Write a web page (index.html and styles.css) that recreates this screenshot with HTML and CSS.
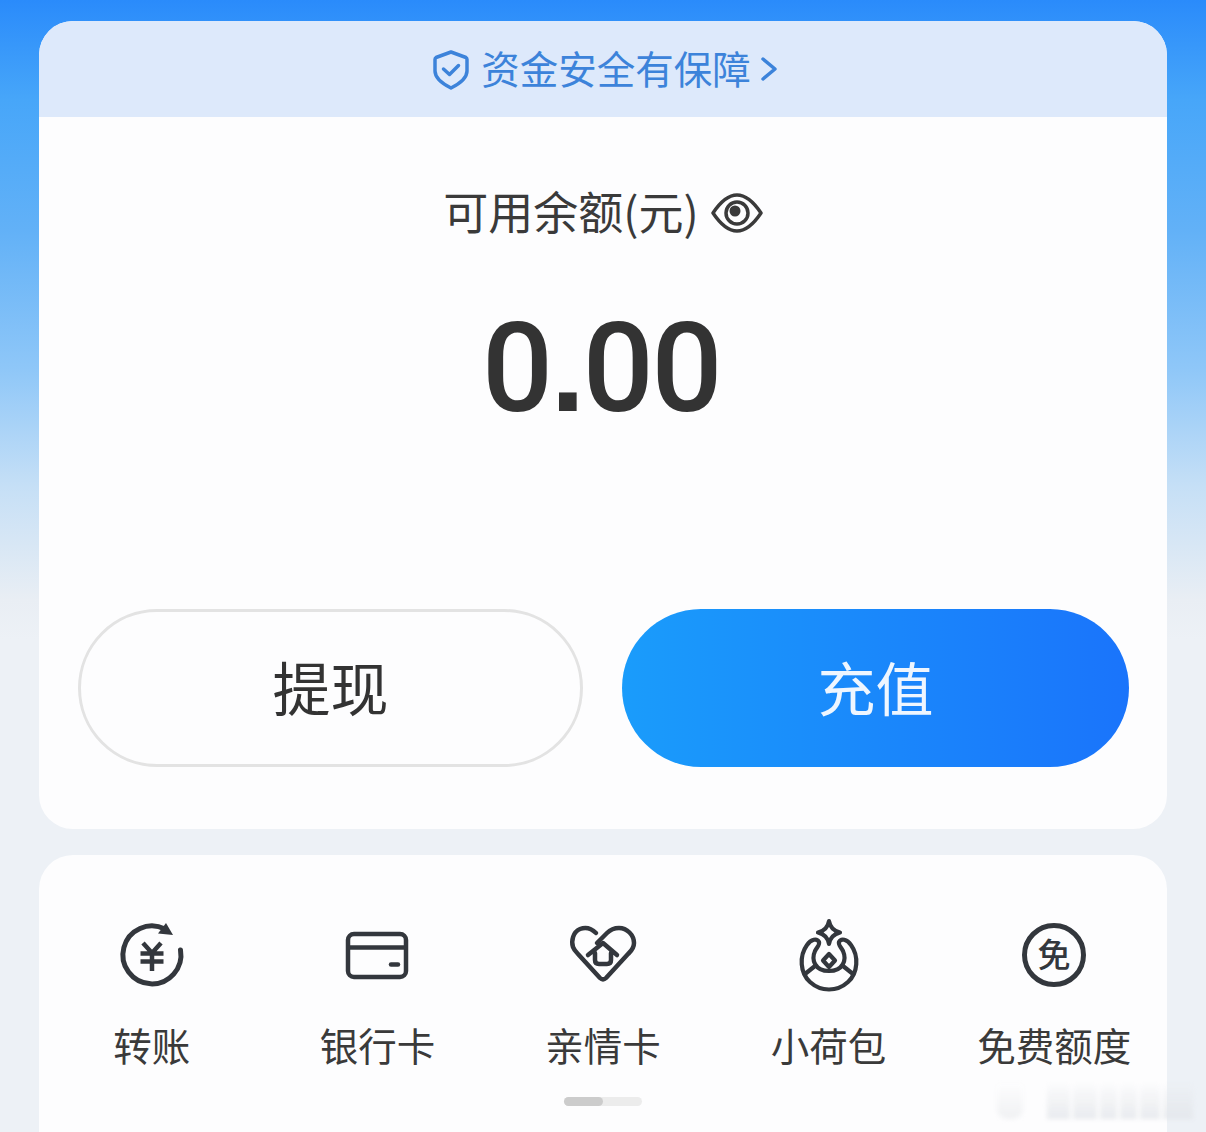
FILE: index.html
```html
<!DOCTYPE html>
<html lang="zh-CN">
<head>
    <meta charset="UTF-8">
    <meta name="viewport" content="width=device-width, initial-scale=1.0">
    <title>余额</title>
    <link rel="stylesheet" href="styles.css">
</head>
<body>
    <main class="page">
        <section class="card balance-card">
            <a class="safe-bar">
                <svg class="safe-shield" viewBox="0 0 36 40" fill="none" stroke="currentColor" stroke-width="3.500" stroke-linejoin="round" stroke-linecap="round">
                    <path d="M18 2 L33 7.500 Q34 8 34 9.500 V21 C34 29 26 34 18 38 C10 34 2 29 2 21 V9.500 Q2 8 3 7.500 Z"/>
                    <path d="M10.500 19 L16.500 24.500 L25.500 15.500"/>
                </svg>
                <span class="safe-text">资金安全有保障</span>
                <svg class="safe-arrow" viewBox="0 0 16 24" fill="none" stroke="currentColor" stroke-width="3.500" stroke-linecap="round" stroke-linejoin="round">
                    <path d="M2 2 L14 12 L2 22"/>
                </svg>
            </a>

            <div class="balance-label">
                <span>可用余额(元)</span>
                <svg class="eye" viewBox="0 0 52 40" fill="none" stroke="currentColor" stroke-width="3.500">
                    <path d="M2 20 C10 8 18 2 26 2 C34 2 42 8 50 20 C42 32 34 38 26 38 C18 38 10 32 2 20 Z" stroke-linejoin="round"/>
                    <circle cx="26" cy="20" r="11"/>
                    <circle cx="24" cy="18" r="5.500" fill="currentColor" stroke="none"/>
                </svg>
            </div>

            <div class="balance-amount">0<span class="amount-dot">.</span>00</div>

            <div class="balance-actions">
                <button class="btn btn-outline">提现</button>
                <button class="btn btn-primary">充值</button>
            </div>
        </section>

        <section class="card tools-card">
            <div class="tools">
                <div class="tool">
                    <svg class="tool-icon" viewBox="0 0 64 64" fill="none" stroke="currentColor" stroke-width="5" stroke-linecap="round">
                        <path d="M60.500 27 A29 29 0 1 1 45 6"/>
                        <path d="M46 0 L53 12 L38 10.500 Z" fill="currentColor" stroke="none"/>
                        <path d="M23 20 L32 30 L41 20 M20.500 30.500 H43.500 M20.500 38.500 H43.500 M32 30 V48" stroke-width="4.500" stroke-linecap="butt"/>
                    </svg>
                    <span class="tool-name">转账</span>
                </div>
                <div class="tool">
                    <svg class="tool-icon" viewBox="0 0 64 64" fill="none" stroke="currentColor" stroke-width="4.500" stroke-linecap="round">
                        <rect x="3" y="11" width="58" height="43" rx="6"/>
                        <path d="M3 24.500 H61" stroke-linecap="butt"/>
                        <path d="M46 41.500 H53"/>
                    </svg>
                    <span class="tool-name">银行卡</span>
                </div>
                <div class="tool">
                    <svg class="tool-icon" viewBox="0 0 64 64" fill="none" stroke="currentColor" stroke-width="4.500" stroke-linecap="round" stroke-linejoin="round">
                        <path d="M25 10 C20 5 14 4 9 6 C2 9 0 18 2 24 C3 27 5 29 7 31 L29 55 Q32 58 35 55 L57 31 C59 29 63 26 63 20 C63 12 56 5 48 5 C43 5 39 7 36 10 L26 20"/>
                        <path d="M17 32 L32 20 L46 32 M24 30 V37 Q24 41 28 41 H36 Q40 41 40 37 V30"/>
                    </svg>
                    <span class="tool-name">亲情卡</span>
                </div>
                <div class="tool">
                    <svg class="tool-icon" viewBox="0 0 64 64" fill="none" stroke="currentColor" stroke-width="4.200" stroke-linecap="round" stroke-linejoin="round">
                        <path d="M32 -2 C33 4 37 8 43 9.500 C37 11 33 15 32 21 C31 15 27 11 21 9.500 C27 8 31 4 32 -2 Z"/>
                        <path d="M22 19 C20 15 14 16 10 22 C2 33 3 50 13 59 C24 69 40 69 51 59 C61 50 62 33 54 22 C50 16 44 15 42 19 C41 22 44 24 46 28 C50 37 46 48 32 48 C18 48 14 37 18 28 C20 24 23 22 22 19 Z"/>
                        <path d="M18 43 L8 51 M46 43 L56 51"/>
                        <path d="M32 31 L38 37.500 L32 44 L26 37.500 Z"/>
                    </svg>
                    <span class="tool-name">小荷包</span>
                </div>
                <div class="tool">
                    <svg class="tool-icon" viewBox="0 0 64 64" fill="none" stroke="currentColor" stroke-width="5">
                        <circle cx="32" cy="32" r="29.500"/>
                        <text class="free-char" x="32" y="44" text-anchor="middle">免</text>
                    </svg>
                    <span class="tool-name">免费额度</span>
                </div>
            </div>
            <div class="scroll-track"><div class="scroll-thumb"></div></div>
        </section>
    </main>

    <div class="watermark">
        <span class="mark-a"></span>
        <span class="mark-b"></span>
        <span class="mark-c"></span>
        <span class="mark-d"></span>
        <span class="mark-e"></span>
        <span class="mark-f"></span>
        <span class="mark-g"></span>
    </div>
</body>
</html>
```

FILE: styles.css
```css
html, body {
    margin: 0;
    padding: 0;
    height: 1132px;
    overflow: hidden;
}

body {
    position: relative;
    font-family: "Noto Sans CJK SC", "Noto Sans", sans-serif;
    color: #333;
    background: linear-gradient(180deg, #2a8bfb 0, #47a6f9 100px, #62b1f7 230px, #8fc7f8 370px, #c5dff6 485px, #e9eef4 600px, #edf1f6 640px, #edf1f6 100%);
}

.page {
    padding: 21px 39px 0;
    display: flex;
    flex-direction: column;
    gap: 26px;
}

.card {
    background: #fdfdfe;
    border-radius: 34px;
    overflow: hidden;
}

.balance-card {
    padding-bottom: 62px;
}

.safe-bar {
    height: 96px;
    background: #dde9fb;
    color: #3c83da;
    display: flex;
    align-items: center;
    justify-content: center;
    padding-left: 4px;
}

.safe-shield {
    width: 36px;
    height: 40px;
    margin-right: 12px;
    margin-top: 2px;
}

.safe-text {
    font-size: 38.500px;
    line-height: 48px;
    padding-bottom: 5px;
}

.safe-arrow {
    width: 16px;
    height: 24px;
    margin-left: 10px;
}

.balance-label {
    margin-top: 66px;
    height: 60px;
    display: flex;
    align-items: center;
    justify-content: center;
    gap: 12px;
    font-size: 45px;
    line-height: 54px;
    color: #3a3a3a;
}

.balance-label span {
    padding-bottom: 4px;
}

.eye {
    width: 52px;
    height: 40px;
}

.balance-amount {
    margin-top: 52px;
    height: 140px;
    line-height: 145px;
    text-align: center;
    font-family: Roboto, sans-serif;
    font-weight: 500;
    font-size: 125px;
    letter-spacing: -2.500px;
    padding-right: 4px;
    color: #333;
}

.amount-dot {
    font-family: "Liberation Sans", sans-serif;
    font-weight: 700;
}

.balance-actions {
    margin: 174px 38px 0 39px;
    display: flex;
    justify-content: space-between;
}

.btn {
    height: 158px;
    border-radius: 79px;
    font-family: inherit;
    font-size: 58px;
    box-sizing: border-box;
    padding: 0 0 5px;
}

.btn-outline {
    width: 505px;
    background: transparent;
    border: 3px solid #e3e3e3;
    color: #333;
}

.btn-primary {
    width: 507px;
    border: none;
    color: #eef6ff;
    background: linear-gradient(90deg, #1a9cfb, #1a74fb);
}

.tools-card {
    padding: 68px 0 60px;
}

.tools {
    display: grid;
    grid-template-columns: repeat(5, 1fr);
}

.tool {
    display: flex;
    flex-direction: column;
    align-items: center;
    gap: 32px;
    color: #33373d;
}

.tool-icon {
    width: 64px;
    height: 64px;
    overflow: visible;
}

.free-char {
    font-size: 33px;
    font-weight: 500;
    fill: currentColor;
    stroke: none;
}

.tool-name {
    font-size: 38.500px;
    line-height: 50px;
    color: #3a3a3a;
    white-space: nowrap;
}

.scroll-track {
    width: 78px;
    height: 9px;
    margin: 28px auto 0;
    border-radius: 5px;
    background: #ececec;
}

.scroll-thumb {
    width: 39px;
    height: 9px;
    border-radius: 5px;
    background: #cccccc;
}

/* blurred watermark over the corner */
.watermark {
    position: absolute;
    left: 997px;
    top: 1084px;
    width: 198px;
    height: 35px;
    display: flex;
    gap: 3px;
    filter: blur(2px);
}

.watermark span {
    display: block;
    height: 100%;
    background: linear-gradient(180deg, rgba(236, 238, 241, 0.1), rgba(226, 229, 233, 0.75));
}

.mark-a { width: 26px; border-radius: 0 0 10px 10px; background: linear-gradient(180deg, #fdfdfe, #f0f1f3) !important; margin-right: 21px; }
.mark-b { width: 23px; }
.mark-c { width: 24px; }
.mark-d { width: 17px; }
.mark-e { width: 17px; }
.mark-f { width: 20px; }
.mark-g { width: 30px; }
```
